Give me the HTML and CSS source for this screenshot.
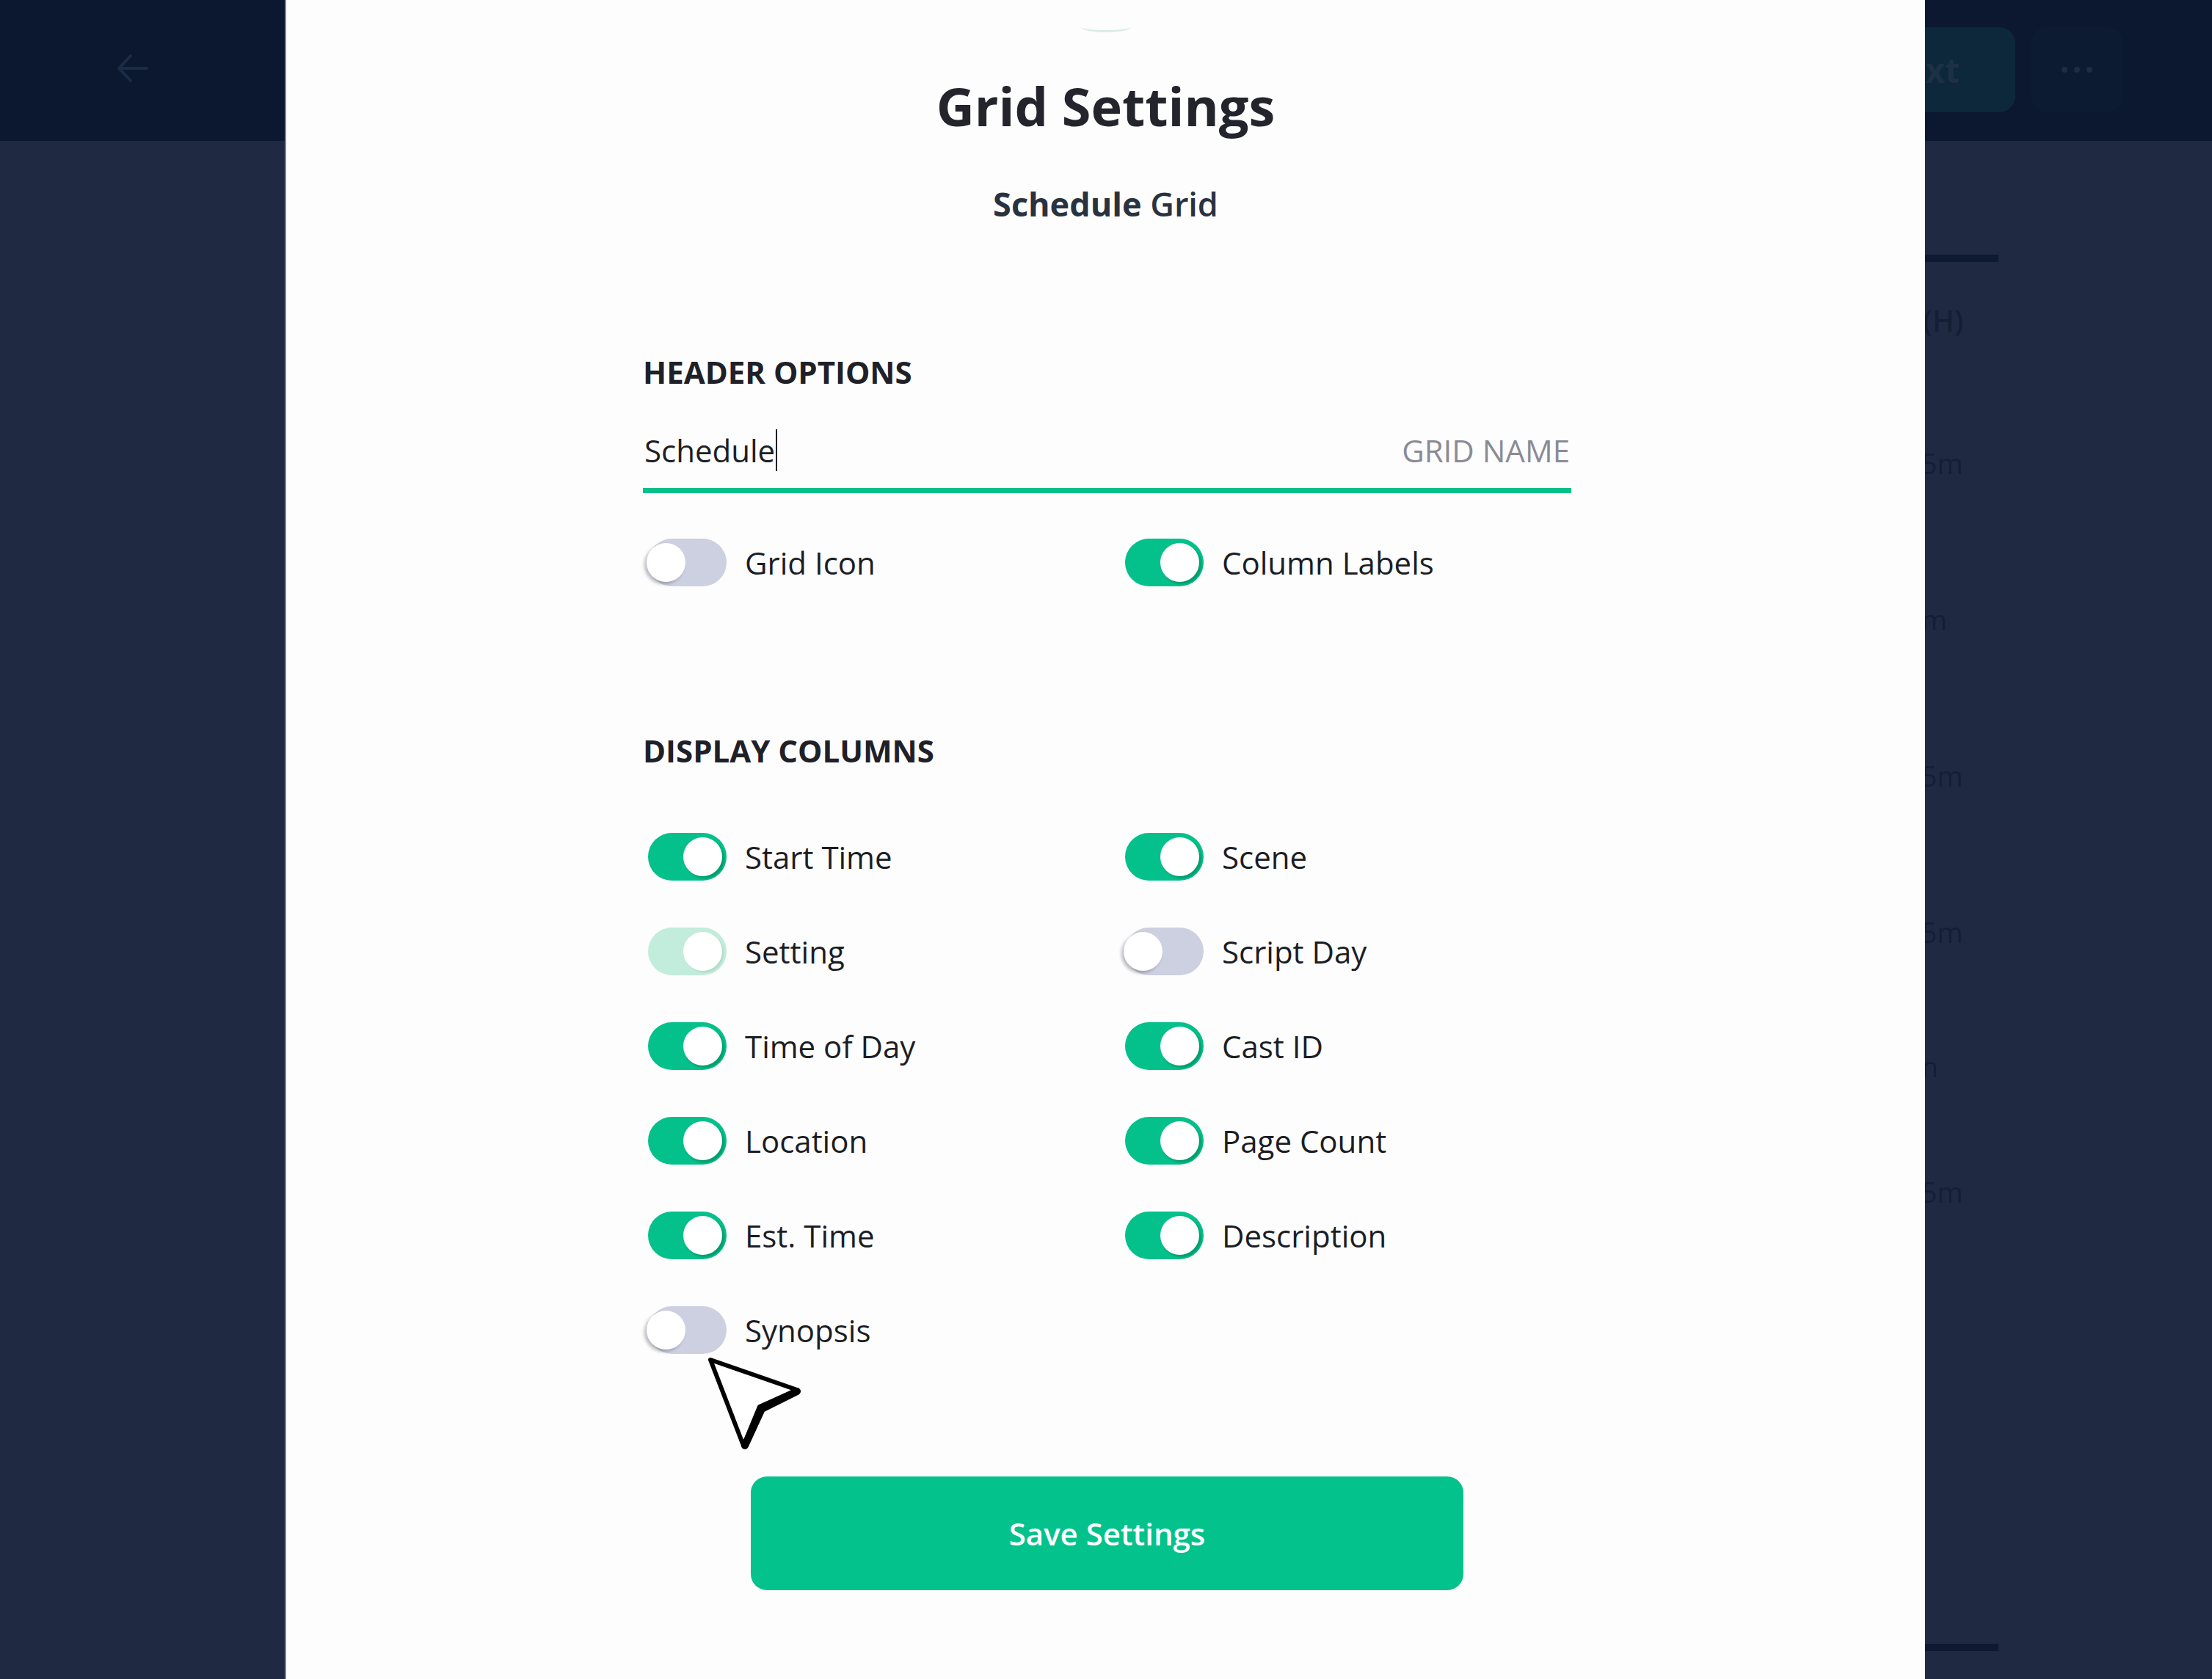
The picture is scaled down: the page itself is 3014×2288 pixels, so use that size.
FILE: index.html
```html
<!DOCTYPE html>
<html lang="en">
<head>
  <meta charset="UTF-8" />
  <title>Grid Settings</title>
  <link rel="stylesheet" href="styles.css">
</head>
<body>

  <!-- Background app (dimmed) -->
  <div class="app">
    <div class="topbar">
      <svg class="back" width="44" height="40" viewBox="0 0 44 40">
        <path d="M20 3 L4 20 L20 37 M6 20 L42 20" fill="none" stroke="#1b2c47" stroke-width="4" stroke-linecap="round" stroke-linejoin="round"/>
      </svg>
      <div class="top-actions">
        <div class="next-btn">Next</div>
        <div class="more-btn"><span></span><span></span><span></span></div>
      </div>
    </div>
    <div class="content">
      <div class="side">
        <div class="side-bar"></div>
        <div class="side-head">(H)</div>
        <div class="side-item">15m</div>
        <div class="side-item">4m</div>
        <div class="side-item">25m</div>
        <div class="side-item short">45m</div>
        <div class="side-item shorter">3n</div>
        <div class="side-item">35m</div>
        <div class="side-bar bottom"></div>
      </div>
    </div>
  </div>

  <!-- Grid settings sheet -->
  <div class="sheet">
    <div class="handle"></div>
    <h1 class="title">Grid Settings</h1>
    <div class="subtitle"><b>Schedule</b> Grid</div>

    <div class="form">
      <h2 class="section-title">HEADER OPTIONS</h2>
      <div class="field">
        <span class="field-value">Schedule<span class="caret"></span></span>
        <span class="field-label">GRID NAME</span>
      </div>
      <div class="toggles header-toggles">
        <div class="option"><div class="switch off"><i></i></div><span>Grid Icon</span></div>
        <div class="option"><div class="switch"><i></i></div><span>Column Labels</span></div>
      </div>

      <h2 class="section-title columns-title">DISPLAY COLUMNS</h2>
      <div class="toggles column-toggles">
        <div class="option"><div class="switch"><i></i></div><span>Start Time</span></div>
        <div class="option"><div class="switch"><i></i></div><span>Scene</span></div>
        <div class="option"><div class="switch locked"><i></i></div><span>Setting</span></div>
        <div class="option"><div class="switch off"><i></i></div><span>Script Day</span></div>
        <div class="option"><div class="switch"><i></i></div><span>Time of Day</span></div>
        <div class="option"><div class="switch"><i></i></div><span>Cast ID</span></div>
        <div class="option"><div class="switch"><i></i></div><span>Location</span></div>
        <div class="option"><div class="switch"><i></i></div><span>Page Count</span></div>
        <div class="option"><div class="switch"><i></i></div><span>Est. Time</span></div>
        <div class="option"><div class="switch"><i></i></div><span>Description</span></div>
        <div class="option"><div class="switch off"><i></i></div><span>Synopsis</span></div>
      </div>

      <button class="save-btn">Save Settings</button>
    </div>

    <!-- pointer -->
    <svg class="pointer" width="150" height="145" viewBox="0 0 150 145">
      <polygon points="18,13 136,54 85,77 63,130" fill="#fff" stroke="#000" stroke-width="6" stroke-linejoin="round"/>
      <polyline points="136,56 88,80 65,130" fill="none" stroke="#000" stroke-width="10" stroke-linejoin="round" stroke-linecap="round"/>
    </svg>
  </div>

</body>
</html>
```

FILE: styles.css
```css
* { box-sizing: border-box; }

body {
  margin: 0;
  width: 3014px;
  height: 2288px;
  overflow: hidden;
  font-family: "Open Sans", "Liberation Sans", sans-serif;
  background-color: #1f2a42;
  position: relative;
}

/* dimmed app behind */

.app {
  display: flex;
  flex-direction: column;
  height: 100%;
}

.topbar {
  height: 192px;
  background-color: #0b1830;
  display: flex;
  align-items: flex-start;
  justify-content: space-between;
  padding: 37px 121px 0 158px;
}

.back {
  margin-top: 36px;
}

.top-actions {
  display: flex;
  gap: 21px;
}

.next-btn {
  width: 200px;
  height: 116px;
  border-radius: 22px;
  background-color: #0c283a;
  color: #1e3044;
  font-size: 46px;
  font-weight: 700;
  display: flex;
  align-items: center;
  padding-left: 13px;
}

.more-btn {
  width: 126px;
  height: 116px;
  border-radius: 22px;
  background-color: #0c1a32;
  display: flex;
  align-items: center;
  justify-content: center;
  gap: 9px;
}

.more-btn span {
  width: 8px;
  height: 8px;
  border-radius: 50%;
  background-color: #1d2c47;
}

.content {
  flex: 1;
  display: flex;
  justify-content: flex-end;
  padding-right: 291px;
}

.side {
  width: 127px;
  padding-top: 155px;
  color: #141e37;
  font-size: 38px;
}

.side-bar {
  height: 10px;
  background-color: #0e1a31;
}

.side-bar.bottom {
  margin-top: 423px;
}

.side-head {
  margin-top: 55px;
  height: 199px;
  font-size: 40px;
  font-weight: 600;
  line-height: 50px;
  padding-left: 24px;
}

.side-item {
  height: 213px;
  line-height: 40px;
}

.side-item.short {
  height: 183px;
}

.side-item.shorter {
  height: 171px;
}

/* sheet */

.sheet {
  position: absolute;
  top: 0;
  left: 390px;
  width: 2233px;
  height: 2288px;
  background-color: #fdfdfd;
  box-shadow: -2px 0 0 #7c8294;
  display: flex;
  flex-direction: column;
  align-items: center;
}

.handle {
  margin-top: 30px;
  width: 68px;
  height: 14px;
  border-bottom: 3px solid #dcebe6;
  border-radius: 0 0 50% 50%;
}

.title {
  margin: 64px 0 0;
  font-size: 72px;
  line-height: 72px;
  font-weight: 700;
  color: #23242c;
}

.subtitle {
  margin-top: 75px;
  font-size: 45px;
  line-height: 45px;
  font-weight: 600;
  color: #293340;
}

.subtitle b {
  font-weight: 700;
}

.form {
  width: 1265px;
  margin-left: 4px;
  display: flex;
  flex-direction: column;
}

.section-title {
  margin: 186px 0 0;
  font-size: 42px;
  line-height: 42px;
  font-weight: 700;
  color: #1f2028;
}

.field {
  margin-top: 65px;
  display: flex;
  justify-content: space-between;
  align-items: center;
  font-size: 42px;
  line-height: 42px;
  padding-bottom: 30px;
  border-bottom: 7px solid #04c08a;
}

.field-value {
  color: #1e1f26;
  position: relative;
  padding-left: 2px;
}

.caret {
  position: absolute;
  right: -3px;
  top: -8px;
  width: 2px;
  height: 57px;
  background-color: #1e1f26;
}

.field-label {
  color: #8a8b94;
  padding-right: 2px;
}

.toggles {
  display: grid;
  grid-template-columns: 650px 1fr;
  row-gap: 64px;
}

.header-toggles {
  margin-top: 62px;
}

.columns-title {
  margin-top: 203px;
}

.column-toggles {
  margin-top: 91px;
}

.option {
  display: flex;
  align-items: center;
  gap: 25px;
  font-size: 42px;
  color: #1c1d24;
  height: 65px;
}

.switch {
  position: relative;
  margin-left: 7px;
  width: 107px;
  height: 65px;
  border-radius: 33px;
  background-color: #04c08a;
}

.switch i {
  position: absolute;
  top: 6px;
  right: 6px;
  width: 53px;
  height: 53px;
  border-radius: 50%;
  background-color: #fff;
  box-shadow: 3px 3px 3px rgba(0, 110, 70, 0.45);
}

.switch.off {
  background-color: #cdd0e1;
}

.switch.off i {
  right: auto;
  left: -2px;
  box-shadow: -3px 3px 4px rgba(60, 60, 80, 0.35);
}

.switch.locked {
  background-color: #c2ecdb;
}

.switch.locked i {
  box-shadow: 2px 2px 2px rgba(150, 190, 175, 0.4);
}

.save-btn {
  margin: 167px auto 0;
  width: 971px;
  height: 155px;
  border: none;
  border-radius: 22px;
  background-color: #04c28b;
  color: #fff;
  font-family: inherit;
  font-size: 42px;
  font-weight: 600;
  cursor: pointer;
}

.pointer {
  position: absolute;
  left: 560px;
  top: 1840px;
}
```
